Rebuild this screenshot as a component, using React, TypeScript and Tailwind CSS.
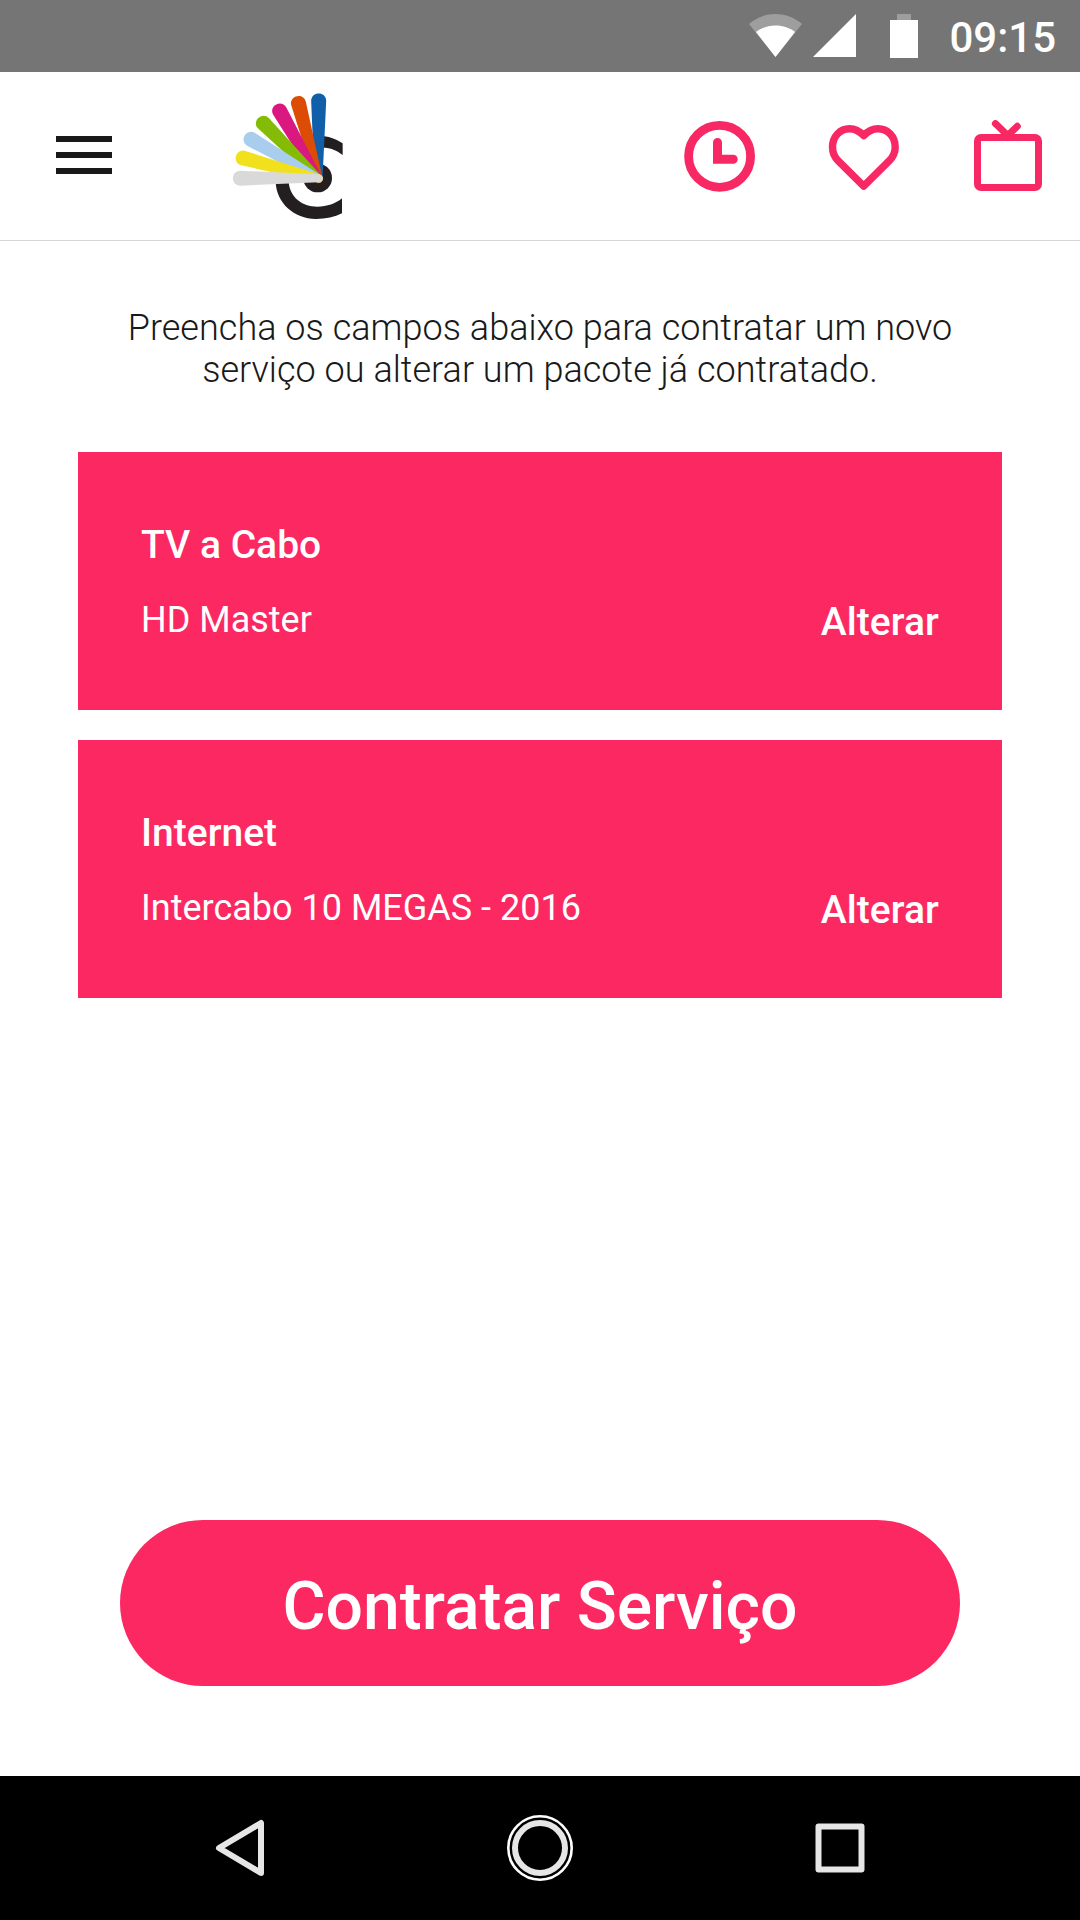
import type { ReactNode } from 'react';

interface Service {
  title: string;
  plan: string;
}

const services: Service[] = [
  { title: 'TV a Cabo', plan: 'HD Master' },
  { title: 'Internet', plan: 'Intercabo 10 MEGAS - 2016' },
];

// Blades of the logo fan, bottom-most first
const blades = [
  { angle: 90, color: '#115fa9' },
  { angle: 75, color: '#dc4c05' },
  { angle: 60, color: '#d9197f' },
  { angle: 45, color: '#83bb05' },
  { angle: 30, color: '#a9cdec' },
  { angle: 15, color: '#f1e01c' },
  { angle: 0, color: '#d9d9d9' },
];

function StatusBar() {
  return (
    <div className="flex h-[72px] shrink-0 items-center justify-end bg-[#757575] pr-[24px] text-white">
      <svg className="h-[72px] w-[174px]" viewBox="745 0 174 72">
        {/* Wifi */}
        <path d="M775.5 57L749 24C756 18 765 14 775.5 14S795 18 802 24Z" fill="#9e9e9e" />
        <path d="M775.5 57L756 32C761 28 768 25.500 775.500 25.500S790 28 795 32Z" fill="#fff" />
        {/* Signal */}
        <path d="M813 57H856V14Z" fill="#fff" />
        {/* Battery */}
        <path d="M897 14H911V20H897Z" fill="#9e9e9e" />
        <path d="M890 20H918V58H890Z" fill="#fff" />
      </svg>
      <span className="ml-[30px] pt-[3px] text-[42px] leading-none font-medium">09:15</span>
    </div>
  );
}

function Logo() {
  return (
    <svg className="ml-[120px] h-[128px] w-[111px]" viewBox="66 36 333 384">
      <path d="M330 168C354 168 377 176 398 190V225C381 211 362 203 338 203H330Z" fill="#231f20" />
      <path d="M197 306C199 368 252 417 318 417C348 417 374 411 396 400V355C377 371 351 380 322 380C276 380 240 352 236 306Z" fill="#231f20" />
      <circle cx="323" cy="294" r="43" fill="#231f20" />
      {blades.map(({ angle, color }) => (
        <path
          key={angle}
          d="M92 272L326 283C342 284 342 306 326 307L92 317C61 318 61 271 92 272Z"
          fill={color}
          transform={`rotate(${angle} 324.500 296)`}
        />
      ))}
    </svg>
  );
}

function HeaderIcon({ children }: { children: ReactNode }) {
  return (
    <button>
      <svg
        className="h-[72px] w-[72px] text-[#f72864]"
        viewBox="0 0 72 72"
        fill="none"
        stroke="currentColor"
        strokeLinecap="round"
      >
        {children}
      </svg>
    </button>
  );
}

function Header() {
  return (
    <header className="flex h-[169px] shrink-0 items-center border-b border-[#d6d6d6] pr-[36px] pl-[56px]">
      <button className="mb-[2px] flex flex-col gap-[10px]">
        <span className="h-[6px] w-[56px] bg-[#191919]" />
        <span className="h-[6px] w-[56px] bg-[#191919]" />
        <span className="h-[6px] w-[56px] bg-[#191919]" />
      </button>
      <Logo />
      <div className="ml-auto flex gap-[72px]">
        <HeaderIcon>
          <circle cx="35.600" cy="36.300" r="31" strokeWidth="8.800" />
          <path d="M33.500 22.500V39.200H49.200" strokeWidth="9" />
        </HeaderIcon>
        <HeaderIcon>
          <path
            d="M35.700 15.600C31.500 11 26.500 8.700 21.500 8.700C12 8.700 4.500 16.500 4.500 27C4.500 32 6.500 37 10 40.600L35.700 66.200L61.400 40.600C65 37 67.200 32 67.200 27C67.200 16.500 59.500 8.700 50 8.700C45 8.700 40 11 35.700 15.600Z"
            strokeWidth="7.400"
            strokeLinejoin="round"
          />
        </HeaderIcon>
        <HeaderIcon>
          <rect x="5.500" y="17.500" width="61" height="50" rx="3.500" strokeWidth="7" />
          <path d="M23.400 3.600L35.700 15.500L45.300 6.300" strokeWidth="7" />
        </HeaderIcon>
      </div>
    </header>
  );
}

function ServiceCard({ title, plan }: Service) {
  return (
    <div className="flex h-[258px] items-end justify-between bg-[#fc2861] px-[63px] pb-[65px] text-white">
      <div className="flex flex-col pb-[4px]">
        <h2 className="text-[39px] leading-[46px] font-medium">{title}</h2>
        <p className="mt-[31px] text-[36px] leading-[42px]">{plan}</p>
      </div>
      <button className="text-[39px] leading-[46px] font-medium tracking-[0.1px]">Alterar</button>
    </div>
  );
}

function NavBar() {
  return (
    <nav className="flex h-[144px] shrink-0 items-center justify-between bg-black px-[204px]">
      <svg className="h-[72px] w-[72px]" viewBox="0 0 72 72" fill="none" stroke="#e6e6e6" strokeWidth="6" strokeLinejoin="round">
        <path d="M57 11V61L15 36Z" />
      </svg>
      <svg className="h-[72px] w-[72px]" viewBox="0 0 72 72" fill="none">
        <circle cx="36" cy="36" r="31.700" stroke="#fff" strokeWidth="2.600" />
        <circle cx="36" cy="36" r="25" stroke="#e6e6e6" strokeWidth="6" />
      </svg>
      <svg className="h-[72px] w-[72px]" viewBox="0 0 72 72" fill="none" stroke="#e6e6e6" strokeWidth="6" strokeLinejoin="round">
        <rect x="14.500" y="14.500" width="43" height="43" />
      </svg>
    </nav>
  );
}

export default function App() {
  return (
    <div className="flex h-[1920px] w-[1080px] flex-col overflow-hidden bg-white font-['Roboto',sans-serif]">
      <StatusBar />
      <Header />
      <main className="flex flex-1 flex-col px-[78px] pt-[66px]">
        <p className="text-center text-[36px] leading-[42px] font-light tracking-[0.03px] text-[#191919]">
          Preencha os campos abaixo para contratar um novo
          <br />
          serviço ou alterar um pacote já contratado.
        </p>
        <div className="mt-[61px] flex flex-col gap-[30px]">
          {services.map((service) => (
            <ServiceCard key={service.title} {...service} />
          ))}
        </div>
        <button className="mx-[42px] mt-auto mb-[90px] h-[166px] rounded-full bg-[#fc2861] pt-[6px] text-[66px] font-medium text-white">
          Contratar Serviço
        </button>
      </main>
      <NavBar />
    </div>
  );
}
